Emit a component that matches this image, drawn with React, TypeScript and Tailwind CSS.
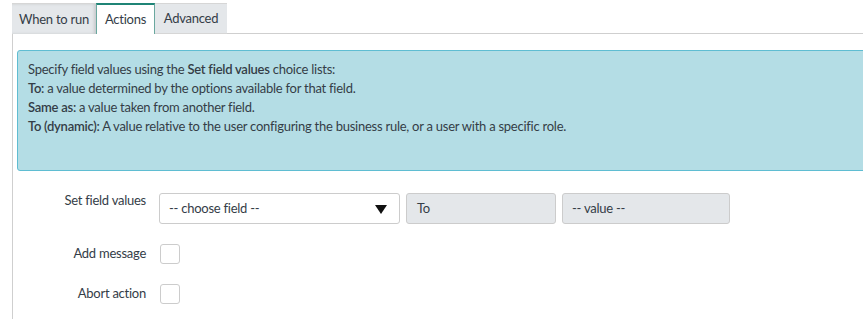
export default function App() {
  return (
    <div className="h-[319px] w-[863px] overflow-hidden bg-white pt-[3px] pl-[12px] font-['Lato',sans-serif] text-[13px] tracking-[-0.25px] text-[#343d47]">
      <div className="flex h-[31px]">
        <div className="flex w-[84px] items-center justify-center border-t border-[#d6d6d6] bg-[#e4e7ea] pt-[1px] shadow-[inset_-2px_0_3px_rgba(0,0,0,0.12)]">
          When to run
        </div>
        <div className="flex w-[59px] items-center justify-center border-x border-t-2 border-x-[#6aa89f] border-t-[#1f8476] bg-white">
          Actions
        </div>
        <div className="flex w-[72px] items-center justify-center border-t border-b border-[#d6d6d6] bg-[#e4e7ea] pt-[1px]">
          Advanced
        </div>
        <div className="flex-1 border-b border-[#cfcfcf]" />
      </div>
      <div className="h-[290px] border-l border-[#cfcfcf] pt-[16px] pl-[4px]">
        <div className="h-[121px] w-[900px] rounded-[3px] border border-[#5fbdd2] bg-[#b4dde5] px-[10px] pt-[9px] leading-[19px]">
          <div>
            Specify field values using the <b className="font-semibold">Set field values</b> choice lists:
          </div>
          <div>
            <b className="font-semibold">To:</b> a value determined by the options available for that field.
          </div>
          <div>
            <b className="font-semibold">Same as:</b> a value taken from another field.
          </div>
          <div>
            <b className="font-semibold">To (dynamic):</b> A value relative to the user configuring the business rule, or a user with a specific role.
          </div>
        </div>

        <div className="mt-[22px] flex flex-col gap-[20px]">
          <div className="flex items-start">
            <div className="w-[129px] -mt-[2px] text-right">Set field values</div>
            <div className="ml-[13px] flex gap-[6px]">
              <div className="flex h-[31px] w-[241px] items-center justify-between rounded-[3px] border border-[#cccccc] bg-white pl-[9px] pr-[12px]">
                <span>-- choose field --</span>
                <svg width="12" height="10" viewBox="0 0 12 10">
                  <path d="M0 1 H12 L6 10 Z" fill="#111" />
                </svg>
              </div>
              <div className="flex h-[31px] w-[150px] items-center rounded-[3px] border border-[#cccccc] bg-[#e4e7ea] pl-[10px]">
                To
              </div>
              <div className="flex h-[31px] w-[168px] items-center rounded-[3px] border border-[#cccccc] bg-[#e4e7ea] pl-[9px]">
                -- value --
              </div>
            </div>
          </div>
          <div className="flex items-center">
            <div className="w-[129px] text-right">Add message</div>
            <div className="ml-[14px] h-[20px] w-[20px] rounded-[3px] border border-[#cccccc] bg-white" />
          </div>
          <div className="flex items-center">
            <div className="w-[129px] text-right">Abort action</div>
            <div className="ml-[14px] h-[20px] w-[20px] rounded-[3px] border border-[#cccccc] bg-white" />
          </div>
        </div>
      </div>
    </div>
  )
}
